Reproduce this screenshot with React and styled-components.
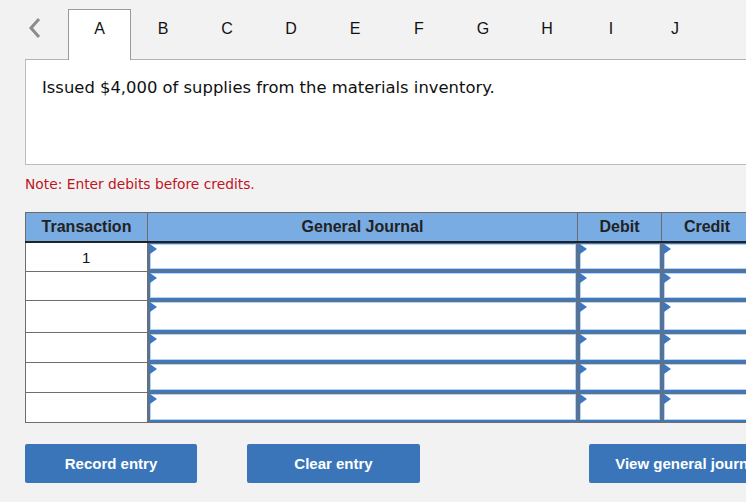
import React from "react";
import styled, { createGlobalStyle } from "styled-components";

const Global = createGlobalStyle`
  html, body { margin: 0; padding: 0; background: #f2f2f2; overflow: hidden; }
  body { width: 746px; height: 502px; font-family: "Liberation Sans", Arial, sans-serif; }
`;

const Page = styled.div`
  padding-left: 25px;
  width: 800px;
`;

const TabBar = styled.div`
  display: flex;
  align-items: flex-end;
  height: 59px;
  border-bottom: 1px solid #b3b3b3;
`;

const Chevron = styled.div`
  width: 43px;
  height: 50px;
  align-self: flex-start;
  padding-top: 17px;
  box-sizing: border-box;
  padding-left: 3px;
`;

const Tab = styled.div`
  width: ${p => (p.$active ? "63px" : "64px")};
  box-sizing: border-box;
  display: flex;
  align-items: center;
  justify-content: center;
  padding-bottom: 13px;
  font-size: 16px;
  color: #111;
  background: ${p => (p.$active ? "#fff" : "transparent")};
  border: 1px solid ${p => (p.$active ? "#9a9a9a" : "transparent")};
  border-bottom: none;
  margin-bottom: -1px;
  height: 51px;
`;

const Question = styled.div`
  height: 105px;
  box-sizing: border-box;
  background: #fff;
  border: 1px solid #bdbdbd;
  border-top: none;
  padding: 18px 16px;
  font-family: "DejaVu Sans", Verdana, sans-serif;
  font-size: 16.4px;
  color: #111;
`;

const Note = styled.div`
  margin-top: 11px;
  font-family: "DejaVu Sans", Verdana, sans-serif;
  font-size: 13.8px;
  color: #c1121f;
`;

const Table = styled.table`
  margin-top: 20px;
  border-collapse: collapse;
  table-layout: fixed;
  background: #fff;
`;

const Th = styled.th`
  width: ${p => p.$w}px;
  height: 28px;
  padding: 0;
  background: #78ace2;
  font-size: 16px;
  font-weight: bold;
  color: #222;
  border: 1px solid #6b6b6b;
  border-left: 1px solid #222;
  border-bottom: 2px solid #222;
  &:first-child { border-left: 1px solid #6b6b6b; }
`;

const Td = styled.td`
  height: ${p => p.$h}px;
  padding: 0;
  border: 2px solid #6e6e6e;
  border-top-width: 1px;
  border-bottom-width: 1px;
  text-align: center;
  font-size: 15px;
  color: #111;
  vertical-align: middle;
  &:first-child { border-left-width: 1px; }
`;

const InputCell = styled.td`
  height: ${p => p.$h}px;
  padding: 0;
  border: 2px solid #6e6e6e;
  border-top-width: 1px;
  border-bottom-width: 1px;
  position: relative;
`;

const Field = styled.div`
  position: absolute;
  inset: 0;
  border: 1px solid #3d79c1;
  border-bottom-width: 2px;
  box-shadow: inset 0 0 0 1px #b9d3ef;
  background: #fff;
`;

const Flag = styled.span`
  position: absolute;
  left: 1px;
  top: 1px;
  width: 0;
  height: 0;
  border-top: 5px solid transparent;
  border-bottom: 5px solid transparent;
  border-left: 7px solid #3b78c3;
`;

const Buttons = styled.div`
  display: flex;
  margin-top: 21px;
`;

const Button = styled.button`
  width: ${p => p.$w}px;
  height: 39px;
  margin-right: ${p => p.$mr}px;
  border: none;
  border-radius: 2px;
  background: #3a75b9;
  color: #fff;
  font-family: "Liberation Sans", Arial, sans-serif;
  font-weight: bold;
  font-size: 15px;
  letter-spacing: 0px;
  white-space: nowrap;
  overflow: hidden;
  flex-shrink: 0;
  padding: 0;
  text-align: center;
`;

const tabs = ["A", "B", "C", "D", "E", "F", "G", "H", "I", "J"];
const rows = [28, 28, 31, 29, 29, 29];

function Input({ h }) {
  return (
    <InputCell $h={h}>
      <Field />
      <Flag />
    </InputCell>
  );
}

export default function App() {
  return (
    <Page>
      <Global />
      <TabBar>
        <Chevron>
          <svg width="14" height="22" viewBox="0 0 14 22">
            <polyline points="11,2 3,11 11,20" fill="none" stroke="#8c8c8c" strokeWidth="3" />
          </svg>
        </Chevron>
        {tabs.map(t => (
          <Tab key={t} $active={t === "A"}>{t}</Tab>
        ))}
      </TabBar>
      <Question>Issued $4,000 of supplies from the materials inventory.</Question>
      <Note>Note: Enter debits before credits.</Note>
      <Table>
        <thead>
          <tr>
            <Th $w={121}>Transaction</Th>
            <Th $w={429}>General Journal</Th>
            <Th $w={83}>Debit</Th>
            <Th $w={90}>Credit</Th>
          </tr>
        </thead>
        <tbody>
          {rows.map((h, i) => (
            <tr key={i}>
              <Td $h={h}>{i === 0 ? "1" : ""}</Td>
              <Input h={h} />
              <Input h={h} />
              <Input h={h} />
            </tr>
          ))}
        </tbody>
      </Table>
      <Buttons>
        <Button $w={172} $mr={50}>Record entry</Button>
        <Button $w={173} $mr={169}>Clear entry</Button>
        <Button $w={198} $mr={0}>View general journal</Button>
      </Buttons>
    </Page>
  );
}
